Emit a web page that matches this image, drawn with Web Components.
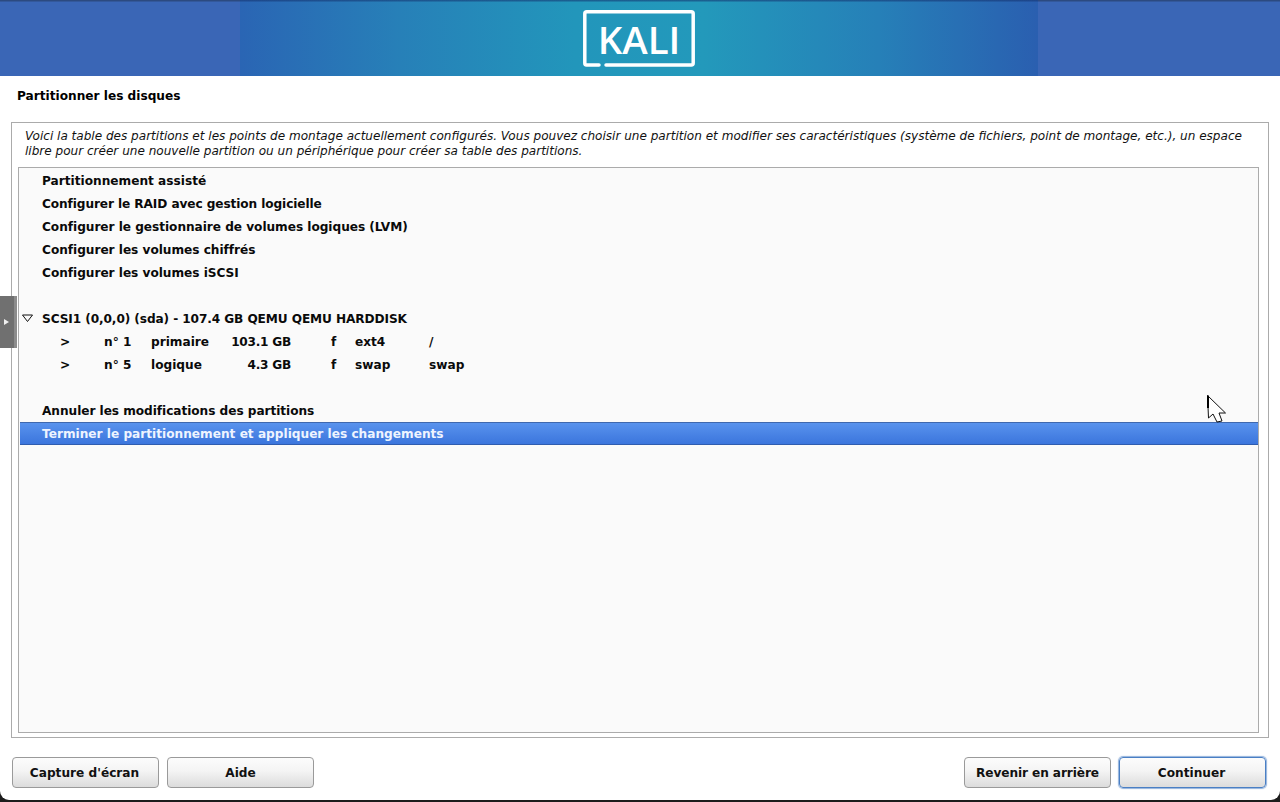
<!DOCTYPE html>
<html lang="fr">
<head>
<meta charset="utf-8">
<title>Partitionner les disques</title>
<style>
  html, body { margin: 0; height: 802px; background: #1c1c1c; overflow: hidden; }
  body { font: bold 12.15px "DejaVu Sans", sans-serif; color: #000; }
</style>
</head>
<body>
<installer-window>
  <kali-banner slot="banner"></kali-banner>
  <step-title slot="title">Partitionner les disques</step-title>
  <partition-panel slot="panel">
    <span slot="help">Voici la table des partitions et les points de montage actuellement configurés. Vous pouvez choisir une partition et modifier ses caractéristiques (système de fichiers, point de montage, etc.), un espace libre pour créer une nouvelle partition ou un périphérique pour créer sa table des partitions.</span>
    <list-row>Partitionnement assisté</list-row>
    <list-row style="letter-spacing:-.1px">Configurer le RAID avec gestion logicielle</list-row>
    <list-row style="letter-spacing:-.04px">Configurer le gestionnaire de volumes logiques (LVM)</list-row>
    <list-row style="letter-spacing:-.03px">Configurer les volumes chiffrés</list-row>
    <list-row style="letter-spacing:-.03px">Configurer les volumes iSCSI</list-row>
    <list-row></list-row>
    <list-row expander style="letter-spacing:-.1px">SCSI1 (0,0,0) (sda) - 107.4 GB QEMU QEMU HARDDISK</list-row>
    <partition-row num="n° 1" kind="primaire" size="103.1 GB" flag="f" fs="ext4" mount="/"></partition-row>
    <partition-row num="n° 5" kind="logique" size="4.3 GB" flag="f" fs="swap" mount="swap"></partition-row>
    <list-row></list-row>
    <list-row style="letter-spacing:-.05px">Annuler les modifications des partitions</list-row>
    <list-row selected>Terminer le partitionnement et appliquer les changements</list-row>
  </partition-panel>
  <button-bar slot="buttons">
    <kali-button style="padding-right:2px">Capture d'écran</kali-button>
    <kali-button>Aide</kali-button>
    <kali-button slot="end" style="letter-spacing:-.1px">Revenir en arrière</kali-button>
    <kali-button slot="end" focused>Continuer</kali-button>
  </button-bar>
</installer-window>
<side-tab></side-tab>
<mouse-pointer></mouse-pointer>

<script>
function define(name, html) {
  customElements.define(name, class extends HTMLElement {
    constructor() {
      super();
      this.attachShadow({ mode: "open" });
    }
    connectedCallback() {
      this.shadowRoot.innerHTML = typeof html === "function" ? html(this) : html;
    }
  });
}

define("installer-window", `
  <style>
    :host { display: flex; flex-direction: column; height: 800px; background: #fff;
      border-radius: 0 0 9px 9px; overflow: hidden; }
  </style>
  <slot name="banner"></slot>
  <slot name="title"></slot>
  <slot name="panel"></slot>
  <slot name="buttons"></slot>`);

define("kali-banner", `
  <style>
    :host { display: flex; justify-content: center; height: 76px; padding-right: 2px;
      background: linear-gradient(#2c4a80 0, #2c4a80 1px, #3a66b6 2px); }
    .art { width: 798px; height: 76px; display: flex; justify-content: center; align-items: flex-start;
      background:
        linear-gradient(rgba(20,50,110,.55) 0, rgba(20,50,110,.55) 1px, transparent 2px),
        linear-gradient(90deg, #2a65b4 0, #2780b8 20%, #2296bb 42%, #2399bb 58%, #2680b8 80%, #2a5fb0 100%); }
    .logo { position: relative; display: flex; align-items: center; justify-content: center;
      width: 112px; height: 57px; margin-top: 10px; }
    svg { position: absolute; inset: 0; display: block; }
    span { font: 600 38.5px/57px "Open Sans", "DejaVu Sans", sans-serif; color: #fff; padding-top: 2px; }
  </style>
  <div class="art">
    <div class="logo">
      <svg width="112" height="57" viewBox="0 0 112 57" fill="none">
        <path d="M16 55H3.500Q1.800 55 1.800 53V3.800Q1.800 1.800 3.800 1.800H108.200Q110.200 1.800 110.200 3.800V53Q110.200 55 108.200 55H23"
          stroke="#fff" stroke-width="3.500" stroke-linecap="round"/>
      </svg>
      <span>KALI</span>
    </div>
  </div>`);

define("step-title", `
  <style>
    :host { display: block; height: 46px; box-sizing: border-box; padding: 12px 0 0 17px;
      font: bold 12.15px/16px "DejaVu Sans", sans-serif; }
  </style>
  <slot></slot>`);

define("partition-panel", `
  <style>
    :host { display: flex; flex-direction: column; height: 616px; box-sizing: border-box;
      margin: 0 11px; padding: 5px 9px 4px 6px; border: 1px solid #ababab; background: #fff; }
    .help { height: 39px; box-sizing: border-box; padding: 1px 0 0 7px;
      font: italic 12.06px/15px "DejaVu Sans", sans-serif; color: #111; }
    .list { flex: 1; padding: 1px 0 1px 1px; background: #fafafa; border: 1px solid #ababab; }
  </style>
  <div class="help"><slot name="help"></slot></div>
  <div class="list"><slot></slot></div>`);

define("list-row", (el) => `
  <style>
    :host { display: block; height: 23px; box-sizing: border-box; padding: 1px 0 0 22px; position: relative;
      font: bold 12.15px/22px "DejaVu Sans", sans-serif; white-space: nowrap; color: #0a0a0a; }
    :host([selected]) { color: #eef4ff; background: linear-gradient(#5a94ee, #3a74dc);
      box-shadow: inset 0 1px 0 #3f68ae, inset 0 -1px 0 #2f5cae; }
    svg { position: absolute; left: 1px; top: 7px; }
  </style>
  ${el.hasAttribute("expander") ? '<svg width="13" height="9" viewBox="0 0 13 9" fill="none"><path d="M1.500 1H11.500L6.500 7.500Z" stroke="#111" stroke-width="1"/></svg>' : ""}
  <slot></slot>`);

define("partition-row", (el) => `
  <style>
    :host { display: grid; height: 23px; box-sizing: border-box; padding: 1px 0 0 40px;
      grid-template-columns: 44px 47px 66px 74px 40px 24px 74px auto; justify-content: start;
      font: bold 12.15px/22px "DejaVu Sans", sans-serif; white-space: nowrap; color: #0a0a0a; }
    .size { text-align: right; letter-spacing: -.25px; }
  </style>
  <span>&gt;</span>
  <span>${el.getAttribute("num")}</span>
  <span>${el.getAttribute("kind")}</span>
  <span class="size">${el.getAttribute("size")}</span>
  <span></span>
  <span>${el.getAttribute("flag")}</span>
  <span>${el.getAttribute("fs")}</span>
  <span>${el.getAttribute("mount")}</span>`);

define("button-bar", `
  <style>
    :host { display: flex; justify-content: space-between; flex: 1; box-sizing: border-box;
      padding: 19px 14px 0 12px; }
    .group { display: flex; gap: 8px; }
  </style>
  <div class="group"><slot></slot></div>
  <div class="group"><slot name="end"></slot></div>`);

define("kali-button", `
  <style>
    :host { display: flex; align-items: center; justify-content: center; width: 147px; height: 31px;
      box-sizing: border-box; border: 1px solid #9a9a9a; border-radius: 4px;
      background: linear-gradient(#fcfcfc, #f4f4f4 45%, #dcdcdc);
      font: bold 12.15px "DejaVu Sans", sans-serif; color: #111; white-space: nowrap; }
    :host([focused]) { border-color: #4a7fc4; padding-right: 2px;
      box-shadow: 0 0 1px 1px rgba(74,127,196,.6); }
  </style>
  <slot></slot>`);

define("side-tab", `
  <style>
    :host { display: flex; align-items: center; justify-content: center; position: absolute; left: 0; top: 296px;
      width: 17px; height: 52px; box-sizing: border-box; padding-right: 1px;
      background: #707070; border-right: 3px solid #8c8c8c; }
    i { width: 0; height: 0; border-left: 5px solid #f0f0f0; border-top: 3.500px solid transparent;
      border-bottom: 3.500px solid transparent; }
  </style>
  <i></i>`);

define("mouse-pointer", `
  <style>
    :host { display: block; position: absolute; left: 1207px; top: 395px; width: 20px; height: 28px; }
    svg { display: block; }
  </style>
  <svg width="20" height="28" viewBox="0 0 20 28">
    <path d="M.5 .5L1.500 23 6 19 10 27 15 26 12 18H18.500Z" fill="#fff" stroke="#111" stroke-width="1" stroke-linejoin="round"/>
    <path d="M1 .5V13" stroke="#000" stroke-width="2"/>
  </svg>`);
</script>
</body>
</html>
